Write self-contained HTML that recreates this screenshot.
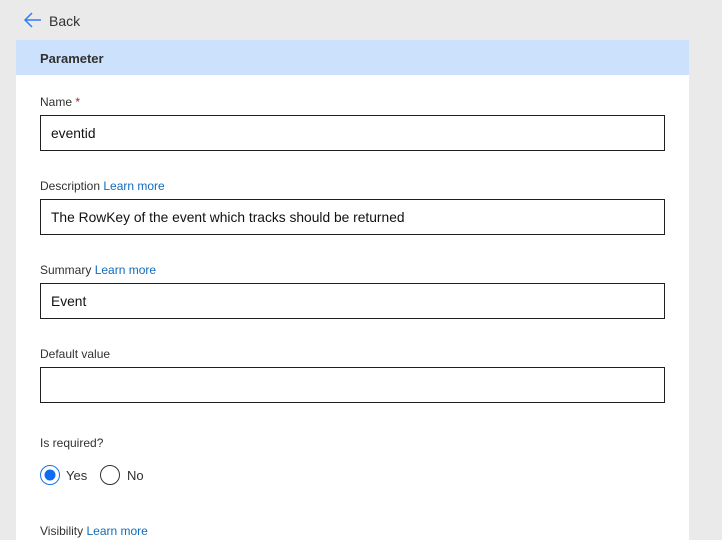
<!DOCTYPE html>
<html><head><style>
body{margin:0;width:722px;height:531px;overflow:hidden;background:#eaeaea;font-family:"Liberation Sans",sans-serif;position:relative}
.abs{position:absolute}
.panel{left:16px;top:40px;width:673px;height:500px;background:#fff}
.hdr{left:16px;top:40px;width:673px;height:35px;background:#cce1fc}
.lbl{font-size:12px;color:#323130;left:40px}
.lbl a{color:#0f6cbd;text-decoration:none}
.inp{left:40px;height:34px;border:1px solid #1f1f1f;font-size:13.8px;color:#111;line-height:36px;padding-left:10px;width:613px}
</style></head><body>
<div class="abs panel"></div>
<div class="abs hdr"></div>
<svg class="abs" style="left:24px;top:12px" width="18" height="16" viewBox="0 0 18 16"><path d="M8 1L1 8l7 7M1 8h16" fill="none" stroke="#2f7bf1" stroke-width="1.5"/></svg>
<div class="abs" style="left:49px;top:13px;font-size:14px;color:#323130">Back</div>
<div class="abs" style="left:40px;top:51px;font-size:13px;font-weight:bold;color:#323130">Parameter</div>
<div class="abs lbl" style="top:95px">Name <span style="color:#a4262c">*</span></div>
<div class="abs inp" style="top:115px">eventid</div>
<div class="abs lbl" style="top:179px">Description <a>Learn more</a></div>
<div class="abs inp" style="top:199px">The RowKey of the event which tracks should be returned</div>
<div class="abs lbl" style="top:263px">Summary <a>Learn more</a></div>
<div class="abs inp" style="top:283px">Event</div>
<div class="abs lbl" style="top:347px">Default value</div>
<div class="abs inp" style="top:367px"></div>
<div class="abs lbl" style="top:436px">Is required?</div>
<svg class="abs" style="left:39px;top:464px" width="100" height="22"><circle cx="11" cy="11" r="9.5" fill="none" stroke="#1a73e8" stroke-width="1"/><circle cx="11" cy="11" r="5.5" fill="#0f6cf0"/><circle cx="71" cy="11" r="9.5" fill="none" stroke="#333" stroke-width="1"/></svg>
<div class="abs" style="left:66px;top:468px;font-size:13px;color:#323130">Yes</div>
<div class="abs" style="left:127px;top:468px;font-size:13px;color:#323130">No</div>
<div class="abs lbl" style="top:524px">Visibility <a>Learn more</a></div>
</body></html>
